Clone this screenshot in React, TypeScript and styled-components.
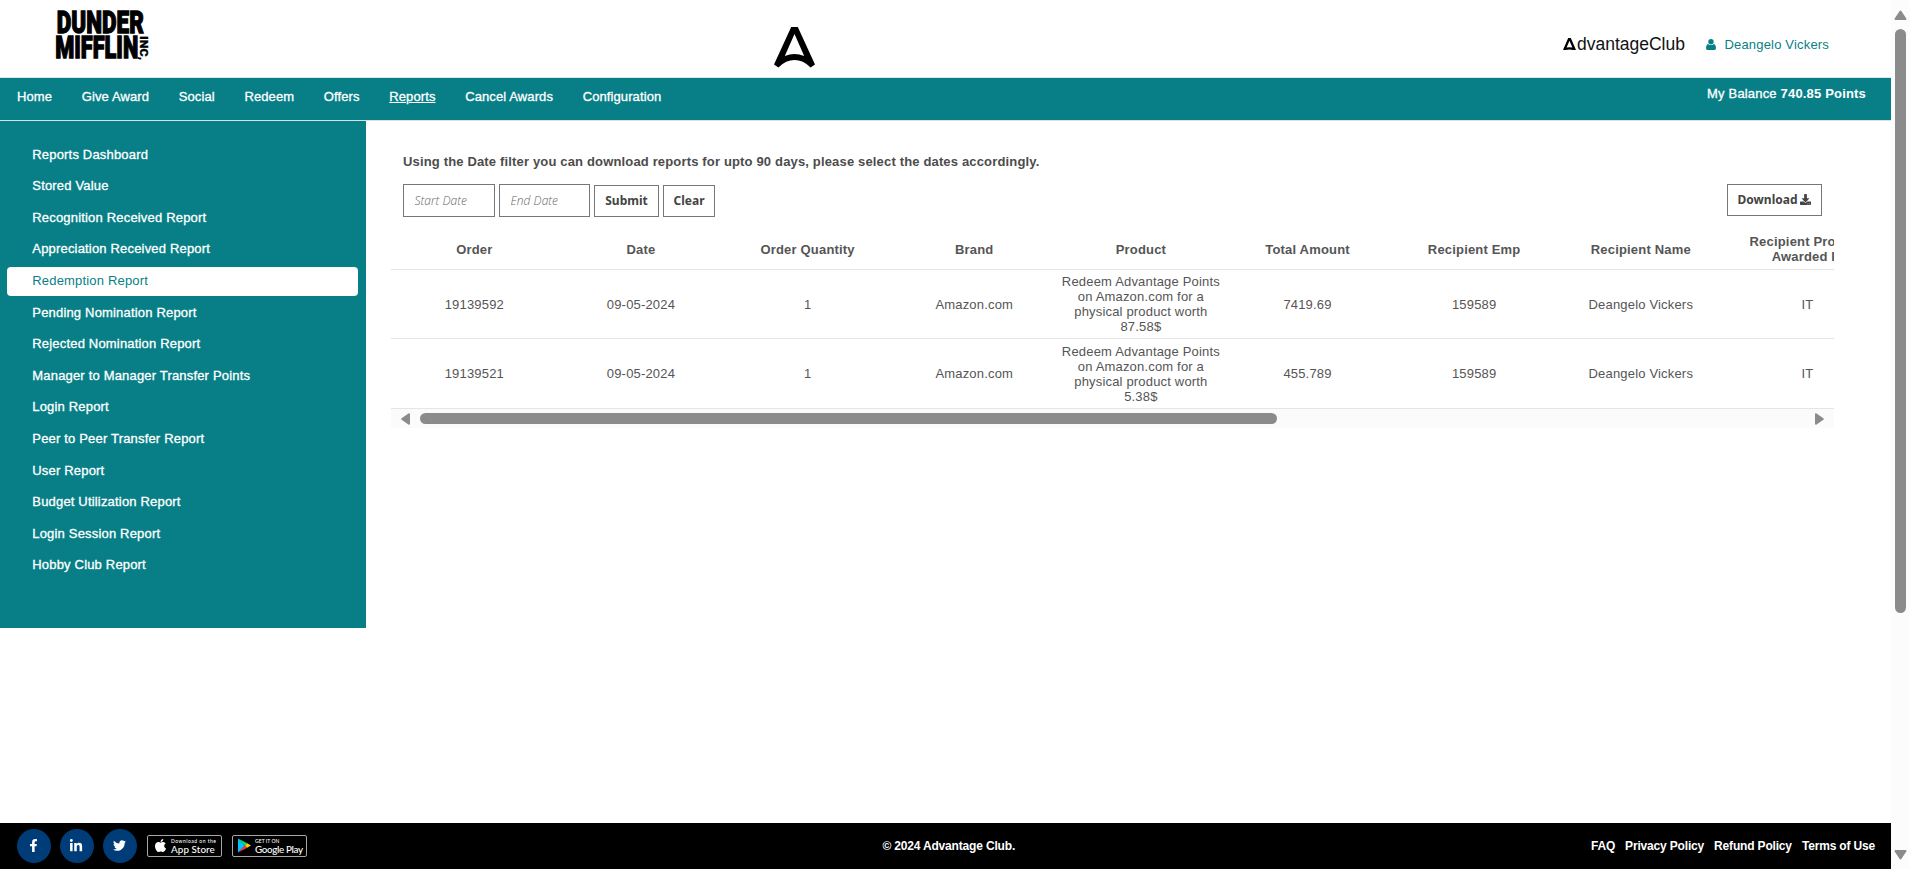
import React from 'react';
import styled, { createGlobalStyle, css } from 'styled-components';
import { FaFacebookF, FaLinkedinIn, FaTwitter, FaApple, FaDownload } from 'react-icons/fa';

const TEAL = '#087f87';
const TEXT = '#555';
const SCROLL = '#8b8b8b';

const GlobalStyle = createGlobalStyle`
  *, *::before, *::after { box-sizing: border-box; }
  html, body { margin: 0; background: #fff; overflow: hidden; }
  body {
    font-family: "Liberation Sans", Arial, sans-serif;
    font-size: 13px;
    line-height: 15px;
    letter-spacing: 0.18px;
    color: ${TEXT};
  }
`;

const semiBold = css`
  -webkit-text-stroke: 0.3px currentColor;
`;

const Screen = styled.div`
  display: flex;
  width: 1910px;
  height: 869px;
`;

const Page = styled.div`
  display: flex;
  flex-direction: column;
  width: 1891px;
`;

const Header = styled.header`
  display: grid;
  grid-template-columns: 774px 41px 1fr;
  height: 78px;
  border-bottom: 1px solid #dfe3e3;
`;

const CompanyLogo = styled.svg`
  margin: 6px 0 0 50px;
`;

const BrandMark = styled.svg`
  margin-top: 27px;
`;

const Account = styled.div`
  display: flex;
  align-items: center;
  justify-content: flex-end;
  height: 88px;
  padding-right: 62px;
`;

const BrandName = styled.span`
  display: flex;
  align-items: baseline;
  margin-right: 21.5px;
  font-size: 17.5px;
  line-height: 20px;
  letter-spacing: 0;
  color: #111;
`;

const SmallMark = styled.svg`
  margin-right: 0.5px;
`;

const UserLink = styled.a`
  display: flex;
  align-items: center;
  gap: 8px;
  color: ${TEAL};
`;

const NavBar = styled.nav`
  display: flex;
  justify-content: space-between;
  height: 43px;
  padding: 0 25px 0 17px;
  background: ${TEAL};
  border-bottom: 1px solid #d5e3e4;
  color: #fff;
`;

const NavList = styled.div`
  display: flex;
  gap: 29.7px;
  padding-top: 11px;
`;

const NavLink = styled.a<{ $active?: boolean }>`
  letter-spacing: 0.1px;
  height: 15px;
  ${semiBold}
  text-decoration: ${(p) => (p.$active ? 'underline' : 'none')};
`;

const Balance = styled.div`
  padding-top: 8px;
  ${semiBold}
  strong { -webkit-text-stroke: 0; }
`;

const Body = styled.div`
  display: flex;
  flex: 1;
  align-items: flex-start;
`;

const Sidebar = styled.aside`
  display: flex;
  flex-direction: column;
  gap: 2.6px;
  width: 366px;
  height: 507px;
  padding: 19.6px 8px 0 7px;
  background: ${TEAL};
`;

const SideLink = styled.a<{ $active?: boolean }>`
  height: 29px;
  padding: 6px 0 0 25.3px;
  border-radius: 4px;
  color: #fff;
  ${semiBold}
  ${(p) =>
    p.$active &&
    css`
      background: #fff;
      color: ${TEAL};
      -webkit-text-stroke: 0;
    `}
`;

const Main = styled.main`
  width: 1443px;
  margin-left: 25px;
  padding-top: 33px;
`;

const Note = styled.p`
  margin: 0 0 15px 12px;
  font-weight: bold;
  letter-spacing: 0.16px;
  color: #4c4c4c;
`;

const Toolbar = styled.div`
  display: flex;
  align-items: flex-end;
  gap: 4px;
  height: 33px;
  padding: 0 12px;
`;

const DateInput = styled.input<{ $width: number }>`
  width: ${(p) => p.$width}px;
  height: 33px;
  padding: 0 10px 0 10.5px;
  border: 1px solid #777;
  background: #fff;
  font: italic 300 12px "Open Sans", sans-serif;
  outline: none;
  &::placeholder { color: #666; opacity: 1; }
`;

const Button = styled.button<{ $width: number; $push?: boolean }>`
  display: flex;
  align-items: center;
  justify-content: center;
  gap: 3px;
  width: ${(p) => p.$width}px;
  height: 32px;
  padding: 0 0 1px;
  border: 1px solid #777;
  background: #fff;
  font: bold 12px "Noto Sans", sans-serif;
  letter-spacing: 0;
  color: #444;
  ${(p) => p.$push && 'margin-left: auto; align-self: flex-start;'}
`;

const TableClip = styled.div`
  overflow: hidden;
  margin-top: 11px;
`;

const Row = styled.div<{ $height: number; $head?: boolean }>`
  display: grid;
  grid-template-columns: repeat(9, 166.65px);
  align-items: center;
  width: 1500px;
  height: ${(p) => p.$height}px;
  padding-top: ${(p) => (p.$head ? 1 : 0)}px;
  border-bottom: 1px solid #e5e5e5;
  text-align: center;
  font-weight: ${(p) => (p.$head ? 'bold' : 'normal')};
`;

const Cell = styled.div`
  padding: 0 4px;
  white-space: pre-line;
`;

const HTrack = styled.div`
  display: flex;
  align-items: center;
  justify-content: space-between;
  height: 19px;
  padding: 0 10px;
  background: #fbfbfb;
`;

const HThumb = styled.div`
  width: 857px;
  height: 11px;
  margin: 0 auto 0 10px;
  border-radius: 6px;
  background: ${SCROLL};
`;

const VTrack = styled.div`
  display: flex;
  flex-direction: column;
  align-items: center;
  width: 19px;
  padding: 10px 0 9px;
  background: #fcfcfc;
`;

const VThumb = styled.div`
  width: 11px;
  height: 584px;
  margin: 9px 0 auto;
  border-radius: 6px;
  background: ${SCROLL};
`;

const Footer = styled.footer`
  display: grid;
  grid-template-columns: 1fr auto 1fr;
  align-items: center;
  height: 46px;
  padding: 0 16px 0 16.5px;
  background: #000;
  color: #fff;
  font-size: 12px;
  font-weight: bold;
  letter-spacing: -0.17px;
`;

const Copyright = styled.span`
  padding-left: 6px;
`;

const Socials = styled.div`
  display: flex;
  align-items: center;
`;

const SocialLink = styled.a`
  display: flex;
  align-items: center;
  justify-content: center;
  width: 34px;
  height: 34px;
  margin-right: 9.2px;
  padding: 0 1px 1px 0;
  border-radius: 50%;
  background: #003c78;
`;

const StoreBadge = styled.a`
  display: flex;
  align-items: center;
  width: 75px;
  height: 22px;
  margin: 0 9px 0 1px;
  padding: 0 0 1px 5px;
  border: 1px solid #a6a6a6;
  border-radius: 2px;
  font-family: Lato, sans-serif;
`;

const StoreText = styled.span<{ $gap: number; $track: number }>`
  display: flex;
  flex-direction: column;
  margin-left: ${(p) => p.$gap}px;
  font-size: 9.8px;
  font-weight: 500;
  line-height: 10px;
  white-space: nowrap;
  letter-spacing: ${(p) => p.$track}px;
  small {
    font-size: 5px;
    line-height: 6px;
    letter-spacing: ${(p) => p.$track + 0.38}px;
  }
`;

const Legal = styled.div`
  display: flex;
  justify-content: flex-end;
  gap: 10px;
`;

const nav = ['Home', 'Give Award', 'Social', 'Redeem', 'Offers', 'Reports', 'Cancel Awards', 'Configuration'];

const reports = [
  'Reports Dashboard',
  'Stored Value',
  'Recognition Received Report',
  'Appreciation Received Report',
  'Redemption Report',
  'Pending Nomination Report',
  'Rejected Nomination Report',
  'Manager to Manager Transfer Points',
  'Login Report',
  'Peer to Peer Transfer Report',
  'User Report',
  'Budget Utilization Report',
  'Login Session Report',
  'Hobby Club Report',
];

const columns = [
  'Order',
  'Date',
  'Order Quantity',
  'Brand',
  'Product',
  'Total Amount',
  'Recipient Emp',
  'Recipient Name',
  'Recipient Process\nAwarded In',
];

const product = (amount: string) =>
  `Redeem Advantage Points\non Amazon.com for a\nphysical product worth\n${amount}`;

const orders = [
  { height: 69, cells: ['19139592', '09-05-2024', '1', 'Amazon.com', product('87.58$'), '7419.69', '159589', 'Deangelo Vickers', 'IT'] },
  { height: 70, cells: ['19139521', '09-05-2024', '1', 'Amazon.com', product('5.38$'), '455.789', '159589', 'Deangelo Vickers', 'IT'] },
];

const Arrow = ({ d, w, h }: { d: string; w: number; h: number }) => (
  <svg width={w} height={h} viewBox={`0 0 ${w} ${h}`}>
    <path d={d} fill={SCROLL} stroke={SCROLL} strokeWidth="2" strokeLinejoin="round" />
  </svg>
);

export default function App() {
  return (
    <Screen>
      <GlobalStyle />
      <Page>
        <Header>
          <CompanyLogo width="110" height="66" aria-label="Dunder Mifflin Inc" fontFamily="Roboto, sans-serif" fontWeight="900" letterSpacing="0">
            <g fill="#000" stroke="#000" strokeWidth="1.3">
              <text x="6.8" y="27.3" fontSize="31" textLength="87" lengthAdjust="spacingAndGlyphs">DUNDER</text>
              <text x="5.2" y="52" fontSize="31" textLength="83" lengthAdjust="spacingAndGlyphs">MIFFLIN</text>
            </g>
            <text transform="translate(90 30) rotate(90)" fontSize="11.5" textLength="24" lengthAdjust="spacingAndGlyphs" stroke="#000" strokeWidth="0.3">INC,</text>
          </CompanyLogo>
          <BrandMark width="41" height="41" viewBox="0 0 41 41">
            <path
              d="M17.2 0 H23.8 L41 37.6 L36.6 40.4 Q29 33 20.5 33 Q12 33 4.4 40.4 L0 37.6 Z M20.5 7 L10.8 29 Q20.5 25.2 30.2 29 Z"
              fillRule="evenodd"
            />
          </BrandMark>
          <Account>
            <BrandName>
              <SmallMark width="13" height="12.5" viewBox="0 0 13 12.5">
                <path
                  d="M5.2 0 H7.8 L13 12 L11.6 12.5 Q9 11.4 6.5 11.4 Q4 11.4 1.4 12.5 L0 12 Z M6.5 2.8 L3.6 9.6 Q6.5 8.9 9.4 9.6 Z"
                  fillRule="evenodd"
                />
              </SmallMark>
              dvantageClub
            </BrandName>
            <UserLink>
              <svg width="10" height="11" viewBox="0 0 10 11" fill="currentColor">
                <circle cx="5" cy="2.8" r="2.7" />
                <path d="M2.2 4.9 Q5 7.3 7.8 4.9 Q10 5.6 10 9.2 Q10 11 8.4 11 H1.6 Q0 11 0 9.2 Q0 5.6 2.2 4.9 Z" />
              </svg>
              Deangelo Vickers
            </UserLink>
          </Account>
        </Header>
        <NavBar>
          <NavList>
            {nav.map((n) => (
              <NavLink key={n} $active={n === 'Reports'}>{n}</NavLink>
            ))}
          </NavList>
          <Balance>My Balance <strong>740.85 Points</strong></Balance>
        </NavBar>
        <Body>
          <Sidebar>
            {reports.map((r) => (
              <SideLink key={r} $active={r === 'Redemption Report'}>{r}</SideLink>
            ))}
          </Sidebar>
          <Main>
            <Note>Using the Date filter you can download reports for upto 90 days, please select the dates accordingly.</Note>
            <Toolbar>
              <DateInput $width={92} placeholder="Start Date" />
              <DateInput $width={91} placeholder="End Date" />
              <Button $width={65}>Submit</Button>
              <Button $width={52}>Clear</Button>
              <Button $width={95} $push>
                Download <FaDownload size={11} />
              </Button>
            </Toolbar>
            <TableClip>
              <Row $height={42} $head>
                {columns.map((c) => <Cell key={c}>{c}</Cell>)}
              </Row>
              {orders.map((o) => (
                <Row key={o.cells[0]} $height={o.height}>
                  {o.cells.map((c, i) => <Cell key={i}>{c}</Cell>)}
                </Row>
              ))}
            </TableClip>
            <HTrack>
              <Arrow w={9} h={12} d="M8 1.2 V10.8 L1.2 6 Z" />
              <HThumb />
              <Arrow w={9} h={12} d="M1 1.2 V10.8 L7.8 6 Z" />
            </HTrack>
          </Main>
        </Body>
        <Footer>
          <Socials>
            <SocialLink><FaFacebookF size={13} /></SocialLink>
            <SocialLink><FaLinkedinIn size={14} /></SocialLink>
            <SocialLink><FaTwitter size={13} /></SocialLink>
            <StoreBadge>
              <FaApple size={15} />
              <StoreText $gap={3} $track={0.1}><small>Download on the</small>App Store</StoreText>
            </StoreBadge>
            <StoreBadge>
              <svg width="13" height="15" viewBox="0 0 13 15">
                <path d="M0 0.5 L7 7.5 L0 14.5 Z" fill="#00c3ff" />
                <path d="M0 0.5 L9.2 5.3 L7 7.5 Z" fill="#00e676" />
                <path d="M0 14.5 L9.2 9.7 L7 7.5 Z" fill="#ff3a44" />
                <path d="M9.2 5.3 L13 7.5 L9.2 9.7 L7 7.5 Z" fill="#ffd000" />
              </svg>
              <StoreText $gap={4} $track={-0.35}><small>GET IT ON</small>Google Play</StoreText>
            </StoreBadge>
          </Socials>
          <Copyright>© 2024 Advantage Club.</Copyright>
          <Legal>
            <span>FAQ</span>
            <span>Privacy Policy</span>
            <span>Refund Policy</span>
            <span>Terms of Use</span>
          </Legal>
        </Footer>
      </Page>
      <VTrack>
        <Arrow w={13} h={10} d="M1.5 9 H11.5 L6.5 1.5 Z" />
        <VThumb />
        <Arrow w={13} h={10} d="M1.5 1 H11.5 L6.5 8.5 Z" />
      </VTrack>
    </Screen>
  );
}
